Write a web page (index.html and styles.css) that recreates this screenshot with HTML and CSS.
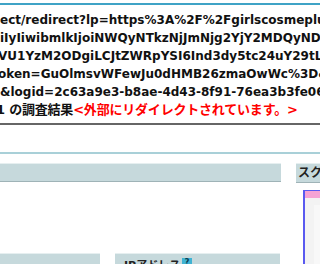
FILE: index.html
```html
<!DOCTYPE html>
<html lang="ja">
<head>
    <meta charset="UTF-8">
    <meta name="viewport" content="width=device-width, initial-scale=1.0">
    <title>調査結果</title>
    <link rel="stylesheet" href="styles.css">
</head>
<body>
    <div class="page">
        <div class="topline"></div>
        <div class="url">
            <div class="url-line">ect/redirect?lp=https%3A%2F%2Fgirlscosmeplus.jp</div>
            <div class="url-line">iIyIiwibmlkIjoiNWQyNTkzNjJmNjg2YjY2MDQyNDk</div>
            <div class="url-line cut">VU1YzM2ODgiLCJtZWRpYSI6Ind3dy5tc24uY29tLyJ9</div>
            <div class="url-line cut">oken=GuOlmsvWFewJu0dHMB26zmaOwWc%3D&amp;f</div>
            <div class="url-line">&amp;logid=2c63a9e3-b8ae-4d43-8f91-76ea3b3fe06a</div>
            <div class="url-line result">1 の調査結果<span class="warn">&lt;外部にリダイレクトされています。&gt;</span></div>
        </div>
        <div class="rule"></div>
        <div class="tabs-line"></div>
        <div class="cols">
            <div class="main">
                <div class="bar"></div>
                <div class="row">
                    <div class="bar small"></div>
                    <div class="bar label">IPアドレス<span class="help">?</span></div>
                </div>
            </div>
            <div class="side">
                <div class="bar side-head">スクリーンショット</div>
                <div class="shot">
                    <div class="shot-head"></div>
                    <div class="shot-body"><div class="shot-inner"></div></div>
                </div>
            </div>
        </div>
    </div>
</body>
</html>
```

FILE: styles.css
```css
html, body {
    margin: 0;
    height: 100%;
}
body {
    background: white;
    font-family: "DejaVu Sans", Verdana, sans-serif;
    overflow: hidden;
}
.page {
    width: 320px;
    height: 264px;
    overflow: hidden;
}
.topline {
    margin-top: 3px;
    height: 2px;
    background-color: #3fa3c6;
}
.url {
    padding-top: 6px;
    font-size: 12px;
    font-weight: bold;
    line-height: 18px;
    color: #111;
}
.url-line {
    white-space: nowrap;
}
.url-line.cut {
    text-indent: -2px;
}
.result {
    font-family: "DejaVu Sans", "Noto Sans CJK JP", sans-serif;
    font-size: 13px;
    text-indent: -4px;
    letter-spacing: -0.2px;
}
.warn {
    color: #ff0000;
}
.rule {
    margin-top: 4px;
    height: 2px;
    background-color: #666;
}
.tabs-line {
    margin-top: 27px;
    height: 2px;
    background-color: #a9d0d8;
}
.cols {
    display: grid;
    grid-template-columns: 281px 200px;
    column-gap: 15px;
    margin-top: 9px;
}
.bar {
    height: 17px;
    background-color: #c6d9dc;
    border-top: 1px solid #e6eff0;
    border-bottom: 1px solid #9fb3b7;
}
.row {
    display: flex;
    gap: 15px;
    margin-top: 71px;
}
.small {
    width: 100px;
}
.label {
    width: 165px;
    box-sizing: border-box;
    padding: 2px 0 0 9px;
    font-family: "DejaVu Sans", "Noto Sans CJK JP", sans-serif;
    font-size: 11px;
    font-weight: bold;
    color: #222;
    display: flex;
    align-items: flex-start;
}
.help {
    display: inline-block;
    width: 10px;
    height: 10px;
    margin: 2px 0 0 2px;
    background-color: #3fb3d3;
    color: #0c3b4f;
    font-size: 8px;
    line-height: 10px;
    text-align: center;
}
.side-head {
    padding: 1px 0 0 2px;
    font-family: "DejaVu Sans", "Noto Sans CJK JP", sans-serif;
    font-size: 12px;
    font-weight: bold;
    color: #222;
    line-height: 16px;
    white-space: nowrap;
}
.shot {
    margin: 7px 0 0 7px;
    border-top: 1px solid #5a5af0;
    border-left: 2px solid #5a5af0;
    height: 80px;
}
.shot-head {
    height: 7px;
    background-color: #f5a3d4;
}
.shot-body {
    height: 80px;
    background-color: #f3f3f3;
    padding: 7px 0 0 9px;
}
.shot-inner {
    height: 70px;
    background-color: #f8f8f8;
}
```
